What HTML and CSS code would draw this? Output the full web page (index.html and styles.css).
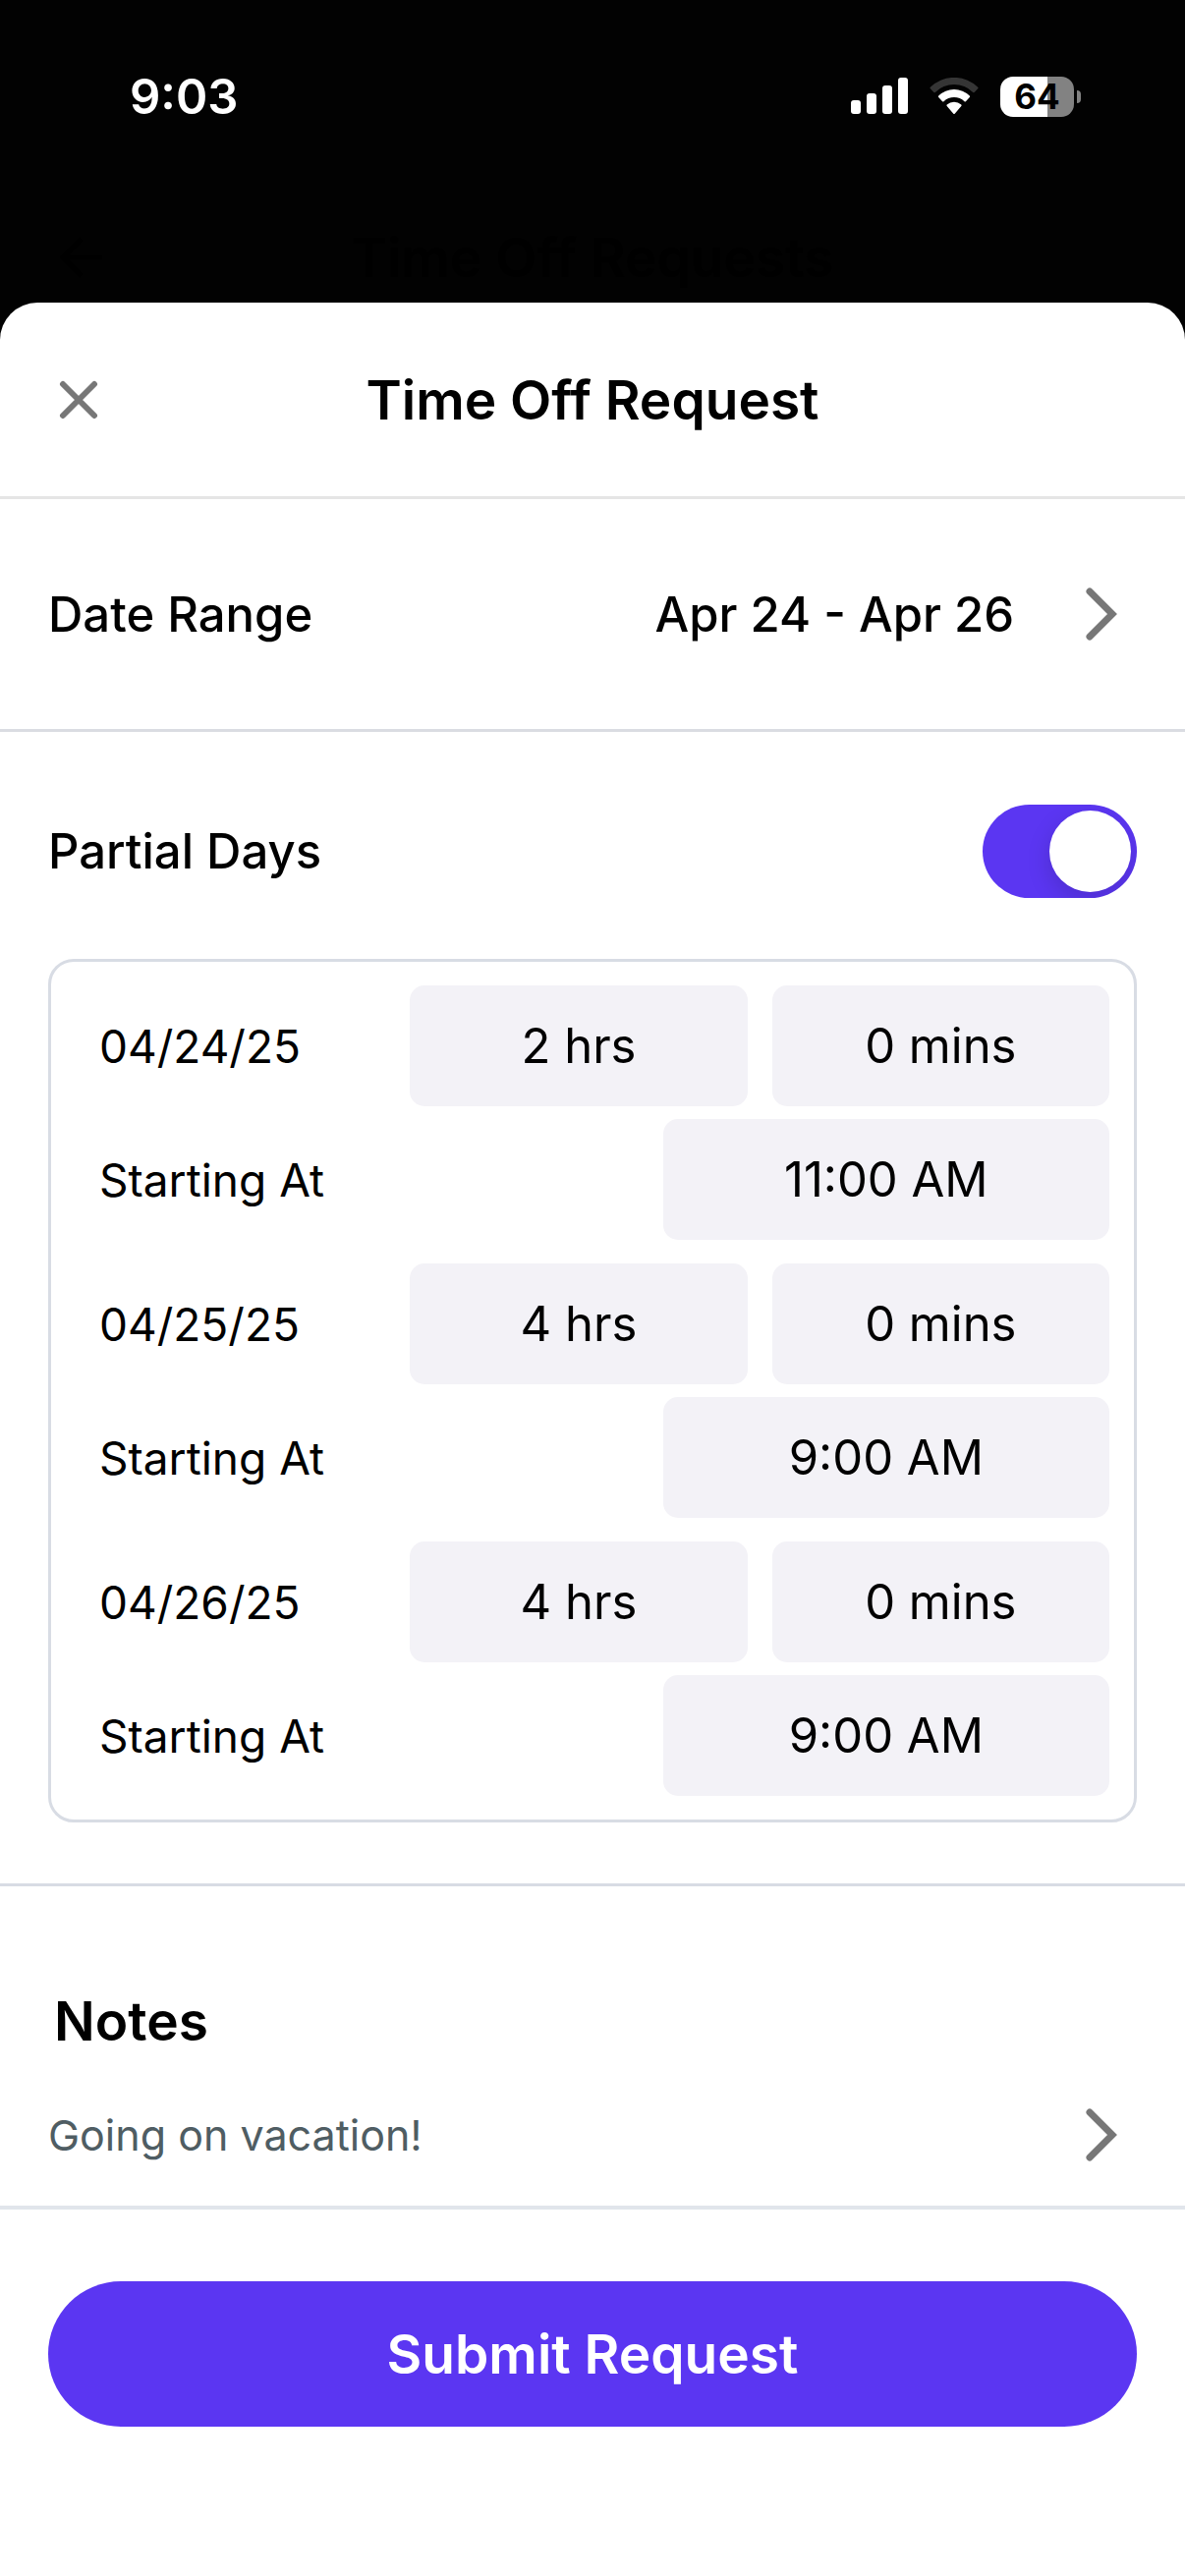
FILE: index.html
```html
<!DOCTYPE html>
<html lang="en">
<head>
    <meta charset="UTF-8">
    <meta name="viewport" content="width=device-width, initial-scale=1.0">
    <title>Time Off Request</title>
    <link rel="stylesheet" href="styles.css">
</head>
<body>

<!-- Status bar -->
<div class="status-bar">
    <span class="clock">9:03</span>
    <div class="status-icons">
        <svg width="58" height="38" viewBox="0 0 58 38" fill="#fff" aria-hidden="true">
            <rect x="0" y="23" width="10" height="14" rx="3"/>
            <rect x="16" y="16" width="10" height="21" rx="3"/>
            <rect x="32" y="8" width="10" height="29" rx="3"/>
            <rect x="48" y="0" width="10" height="37" rx="3"/>
        </svg>
        <svg width="50" height="38" viewBox="0 0 50 38" aria-hidden="true">
            <path d="M0.8 11.2a1 1 0 0 1 0-1.4A34.5 34.5 0 0 1 49.2 9.8a1 1 0 0 1 0 1.4L45.6 14.9a1 1 0 0 1-1.4 0A27.5 27.5 0 0 0 5.8 14.9a1 1 0 0 1-1.4 0Z" fill="#353535"/>
            <path d="M9.2 19.9a1 1 0 0 1 0-1.4A22.6 22.6 0 0 1 40.8 18.5a1 1 0 0 1 0 1.4L36.9 24.2a1 1 0 0 1-1.4 0A15.4 15.4 0 0 0 14.5 24.2a1 1 0 0 1-1.4 0Z" fill="#fff"/>
            <path d="M17.7 28.9a1 1 0 0 1 0-1.4A10.8 10.8 0 0 1 32.3 27.5a1 1 0 0 1 0 1.4L25.9 36.4a1.2 1.2 0 0 1-1.8 0Z" fill="#fff"/>
        </svg>
        <div class="battery">
            <span class="battery-level">64</span>
            <span class="battery-tip"></span>
        </div>
    </div>
</div>

<!-- Screen behind the sheet -->
<div class="backdrop-header">
    <svg width="44" height="44" viewBox="0 0 44 44" fill="none" stroke="#000" stroke-width="5" aria-hidden="true">
        <path d="M22 3 3 22l19 19M3 22h40"/>
    </svg>
    <span class="backdrop-title">Time Off Requests</span>
</div>

<!-- Sheet -->
<form class="sheet">
    <div class="sheet-header">
        <button type="button" class="close-btn" aria-label="Close">
            <svg width="40" height="40" viewBox="0 0 40 40" fill="none" stroke="#777" stroke-width="6" stroke-linecap="round">
                <path d="M4 4l32 32M36 4L4 36"/>
            </svg>
        </button>
        <h1>Time Off Request</h1>
    </div>

    <button type="button" class="row date-range">
        <span class="row-label">Date Range</span>
        <span class="row-value">Apr 24 - Apr 26</span>
        <svg class="chevron" width="32" height="54" viewBox="0 0 32 54" fill="none" stroke="#777" stroke-width="7" stroke-linecap="round">
            <path d="M4 4l23 23L4 50"/>
        </svg>
    </button>

    <div class="partial">
        <div class="partial-header">
            <label class="row-label" for="partialDays">Partial Days</label>
            <input type="checkbox" class="toggle" id="partialDays" checked>
        </div>

        <div class="days">
            <div class="day">
                <div class="day-row">
                    <label for="hrs1">04/24/25</label>
                    <select id="hrs1"><option>2 hrs</option></select>
                    <select aria-label="04/24/25 minutes"><option>0 mins</option></select>
                </div>
                <div class="day-row">
                    <label for="start1">Starting At</label>
                    <select id="start1" class="start"><option>11:00 AM</option></select>
                </div>
            </div>
            <div class="day">
                <div class="day-row">
                    <label for="hrs2">04/25/25</label>
                    <select id="hrs2"><option>4 hrs</option></select>
                    <select aria-label="04/25/25 minutes"><option>0 mins</option></select>
                </div>
                <div class="day-row">
                    <label for="start2">Starting At</label>
                    <select id="start2" class="start"><option>9:00 AM</option></select>
                </div>
            </div>
            <div class="day">
                <div class="day-row">
                    <label for="hrs3">04/26/25</label>
                    <select id="hrs3"><option>4 hrs</option></select>
                    <select aria-label="04/26/25 minutes"><option>0 mins</option></select>
                </div>
                <div class="day-row">
                    <label for="start3">Starting At</label>
                    <select id="start3" class="start"><option>9:00 AM</option></select>
                </div>
            </div>
        </div>
    </div>

    <div class="notes">
        <h2>Notes</h2>
        <button type="button" class="row notes-row">
            <span class="notes-text">Going on vacation!</span>
            <svg class="chevron" width="32" height="54" viewBox="0 0 32 54" fill="none" stroke="#777" stroke-width="7" stroke-linecap="round">
                <path d="M4 4l23 23L4 50"/>
            </svg>
        </button>
    </div>

    <div class="footer">
        <button type="submit" class="submit-btn">Submit Request</button>
    </div>
</form>

</body>
</html>
```
FILE: styles.css
```css
* {
    box-sizing: border-box;
}
body {
    margin: 0;
    min-height: 100vh;
    display: flex;
    flex-direction: column;
    background-color: #020202;
    color: #000;
    font-family: Inter, "Liberation Sans", sans-serif;
}
button, select {
    font-family: inherit;
    color: inherit;
    border: none;
    cursor: pointer;
}
h1, h2 {
    margin: 0;
    font-size: 55px;
    line-height: 68px;
    font-weight: 600;
}

/* Status bar */
.status-bar {
    display: flex;
    justify-content: space-between;
    align-items: center;
    height: 196px;
    padding: 0 106px 0 132px;
    color: #fff;
}
.clock {
    font-size: 49px;
    font-weight: 600;
}
.status-icons {
    display: flex;
    align-items: center;
    gap: 22px;
}
.battery {
    display: flex;
    align-items: center;
    gap: 3px;
}
.battery-level {
    width: 75px;
    height: 41px;
    border-radius: 13px;
    background: linear-gradient(to right, #fff 64%, #828282 64%);
    color: #000;
    font-size: 35px;
    line-height: 41px;
    font-weight: 700;
    text-align: center;
}
.battery-tip {
    width: 4px;
    height: 13px;
    border-radius: 0 4px 4px 0;
    background-color: #828282;
}

/* Header of the screen behind the sheet */
.backdrop-header {
    display: flex;
    align-items: center;
    height: 112px;
    padding: 20px 61px 0;
}
.backdrop-title {
    flex: 1;
    padding-right: 44px;
    color: #000;
    font-size: 55px;
    font-weight: 600;
    text-align: center;
}

/* Sheet */
.sheet {
    flex: 1;
    background-color: #fff;
    border-radius: 38px 38px 0 0;
}
.sheet-header {
    display: flex;
    align-items: center;
    height: 200px;
    padding: 0 60px;
    border-bottom: 3px solid #e5e5e5;
}
.sheet-header h1 {
    flex: 1;
    padding-right: 40px;
    text-align: center;
}
.close-btn {
    display: flex;
    padding: 0;
    background: none;
}

/* Tappable rows */
.row {
    display: flex;
    align-items: center;
    width: 100%;
    padding: 0 69px 0 49px;
    background: none;
    text-align: left;
}
.row-label, .row-value {
    font-size: 49px;
    font-weight: 500;
}
.row-label, .notes-text {
    flex: 1;
}
.chevron {
    margin-left: 73px;
}
.date-range {
    height: 237px;
    border-bottom: 3px solid #dadce2;
}

/* Partial days */
.partial {
    padding: 74px 49px 62px;
    border-bottom: 3px solid #d8dce4;
}
.partial-header {
    display: flex;
    align-items: center;
    margin-bottom: 62px;
}
.toggle {
    appearance: none;
    display: flex;
    justify-content: flex-end;
    width: 157px;
    height: 95px;
    margin: 0;
    padding: 6px;
    border-radius: 48px;
    background-color: #5b36f2;
    overflow: hidden;
    cursor: pointer;
}
.toggle::before {
    content: "";
    width: 83px;
    height: 83px;
    border-radius: 50%;
    background-color: #fff;
    box-shadow: 0 9px 24px rgba(0, 0, 0, 0.15);
}
.toggle:not(:checked) {
    justify-content: flex-start;
    background-color: #e5e5e5;
}
.days {
    display: flex;
    flex-direction: column;
    gap: 24px;
    padding: 24px 25px 24px 49px;
    border: 3px solid #d8dce4;
    border-radius: 26px;
}
.day {
    display: flex;
    flex-direction: column;
    gap: 13px;
}
.day-row {
    display: flex;
    align-items: center;
    gap: 25px;
}
.day-row label {
    flex: 1;
    font-size: 46px;
    font-weight: 400;
}
.day-row select {
    appearance: none;
    width: 33.4%;
    height: 123px;
    padding: 0;
    border-radius: 15px;
    background-color: #f3f2f7;
    font-size: 49px;
    text-align: center;
    text-align-last: center;
}
.day-row .start {
    width: 44.2%;
}

/* Notes */
.notes {
    padding-top: 103px;
    border-bottom: 4px solid #e1e5eb;
}
.notes h2 {
    padding: 0 55px;
}
.notes-row {
    height: 154px;
    padding-top: 10px;
}
.notes-text {
    color: #4f5d63;
    font-size: 43px;
}

/* Footer */
.footer {
    padding: 73px 49px;
}
.submit-btn {
    width: 100%;
    height: 148px;
    border-radius: 74px;
    background-color: #5b36f2;
    color: #fff;
    font-size: 55px;
    font-weight: 600;
}
```
